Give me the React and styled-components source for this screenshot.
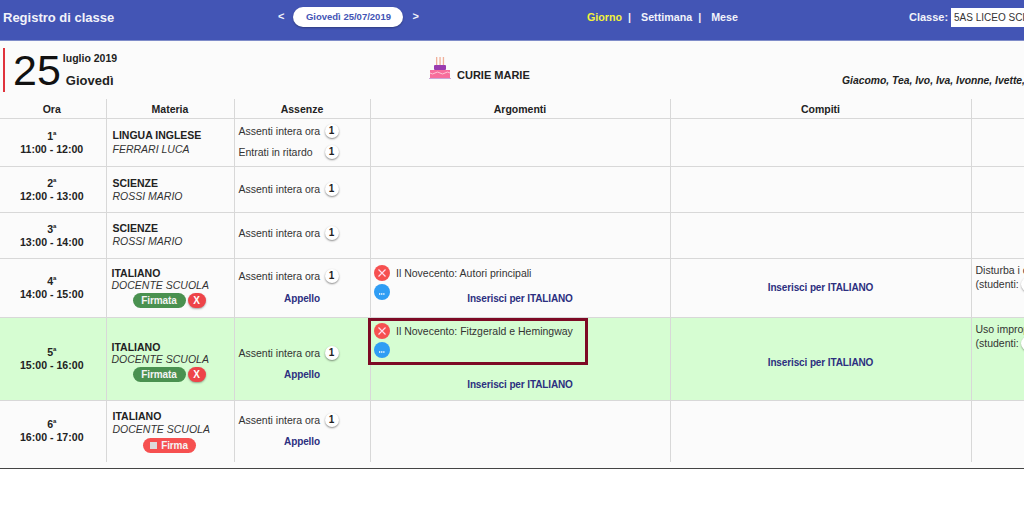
import React from "react";
import styled, { createGlobalStyle } from "styled-components";

const Global = createGlobalStyle`
  html, body {
    margin: 0;
    padding: 0;
    background: #fff;
    overflow: hidden;
  }
  body {
    font-family: "Liberation Sans", Arial, sans-serif;
    color: #222;
  }
`;

const Page = styled.div`
  width: 1024px;
  height: 512px;
  overflow: hidden;
`;

const Content = styled.div`
  width: 1024px;
  height: 468px;
  background: #fbfbfb;
  border-bottom: 1px solid #444;
  overflow: hidden;
`;

const TopBar = styled.header`
  height: 41px;
  box-sizing: border-box;
  padding-bottom: 6px;
  background: #4355b5;
  border-bottom: 1px solid #7f8cc9;
  color: #f2f3fa;
  display: flex;
  align-items: center;
  font-weight: bold;
  white-space: nowrap;
  & > * {
    flex-shrink: 0;
  }
`;

const Title = styled.div`
  width: 278px;
  padding-left: 3px;
  box-sizing: border-box;
  font-size: 13px;
`;

const DateNav = styled.nav`
  width: 309px;
  display: flex;
  align-items: center;
  gap: 9px;
  font-size: 11px;
`;

const Arrow = styled.span`
  padding-bottom: 3px;
`;

const DatePill = styled.div`
  width: 110px;
  height: 20px;
  border-radius: 10px;
  background: #fff;
  color: #4355b5;
  font-size: 9.5px;
  line-height: 20px;
  text-align: center;
  box-shadow: 0 1px 2px rgba(0, 0, 0, 0.3);
`;

const Views = styled.nav`
  width: 322px;
  display: flex;
  font-size: 10.7px;
`;

const ViewLink = styled.span`
  color: ${(p) => (p.$active ? "#f2f23a" : "#f2f3fa")};
  margin-right: 6px;
`;

const Sep = styled.span`
  margin-right: 10px;
`;

const ClassLabel = styled.label`
  width: 42px;
  font-size: 11px;
`;

const ClassSelect = styled.div`
  width: 120px;
  height: 19px;
  background: #fff;
  color: #333;
  font-size: 10px;
  font-weight: normal;
  line-height: 19px;
  padding-left: 3px;
`;

const DayBar = styled.section`
  height: 58px;
  display: flex;
  white-space: nowrap;
  & > * {
    flex-shrink: 0;
  }
`;

const DayBlock = styled.div`
  width: 397px;
  margin: 7px 0 7px 3px;
  height: 44px;
  box-sizing: border-box;
  border-left: 2px solid #e0323c;
  padding-left: 8px;
  display: flex;
`;

const DayNum = styled.div`
  font-size: 43px;
  line-height: 44px;
  color: #111;
  margin-right: 2px;
`;

const DayText = styled.div`
  display: flex;
  flex-direction: column;
  font-weight: bold;
`;

const MonthText = styled.span`
  font-size: 10.5px;
  line-height: 12px;
  margin-top: 4px;
`;

const WeekdayText = styled.span`
  font-size: 13px;
  line-height: 14px;
  margin: 10px 0 0 3px;
`;

const Birthday = styled.div`
  width: 442px;
  height: 38px;
  padding: 15px 0 0 29px;
  box-sizing: border-box;
  display: flex;
  align-items: flex-end;
  gap: 6px;
  font-size: 11px;
  font-weight: bold;
  color: #222;
`;

const BirthdayName = styled.span`
  margin-bottom: -2px;
`;

const Saints = styled.div`
  padding-top: 33px;
  font-size: 10.35px;
  font-weight: bold;
  font-style: italic;
  line-height: 13px;
  color: #222;
`;

const Table = styled.table`
  table-layout: fixed;
  width: 1271px;
  border-collapse: collapse;
  font-size: 10.5px;
`;

const Th = styled.th`
  height: 19px;
  padding: 0;
  font-size: 10.5px;
  text-align: center;
  color: #222;
  border-left: 1px solid #d8d8d8;
  border-bottom: 1px solid #d8d8d8;
  &:first-child {
    border-left: 0;
    padding-right: 2px;
  }
`;

const Tr = styled.tr`
  height: ${(p) => p.$h}px;
  background: ${(p) => (p.$current ? "#d6fdd2" : "transparent")};
  border-bottom: ${(p) => (p.$last ? "0" : "1px solid #d8d8d8")};
`;

const Td = styled.td`
  padding: 0 4px;
  vertical-align: top;
  border-left: 1px solid #d8d8d8;
  box-sizing: border-box;
  &:first-child {
    border-left: 0;
  }
`;

const HourCell = styled(Td)`
  padding: 0 4px 0 2px;
  vertical-align: middle;
  text-align: center;
  font-weight: bold;
  line-height: 13px;
  font-size: 10.6px;
`;

const Sup = styled.sup`
  font-size: 6px;
  line-height: 0;
`;

const Subject = styled.div`
  font-weight: bold;
  line-height: 12px;
  margin: ${(p) => p.$top}px 0 0 ${(p) => (p.$inset ? 2 : 1)}px;
  font-size: 10.5px;
  color: #222;
`;

const Teacher = styled.div`
  font-style: italic;
  line-height: 13px;
  margin: ${(p) => p.$gap}px 0 0 ${(p) => (p.$inset ? 2 : 1)}px;
  color: #333;
  white-space: nowrap;
`;

const SignRow = styled.div`
  display: flex;
  justify-content: center;
  align-items: center;
  gap: 2px;
  margin: ${(p) => p.$top}px 2px 0 0;
`;

const SignBtn = styled.span`
  height: 15px;
  line-height: 15px;
  border-radius: 8px;
  background: ${(p) => (p.$off ? "#f65050" : "#4a9150")};
  color: #f4f4f4;
  font-size: 10px;
  letter-spacing: -0.1px;
  font-weight: bold;
  text-align: center;
  width: 53px;
  display: inline-flex;
  justify-content: center;
  align-items: center;
  gap: 4px;
`;

const SquareMark = styled.i`
  width: 7px;
  height: 7px;
  background: #ddd;
`;

const XBtn = styled.span`
  width: 18px;
  height: 15px;
  line-height: 15px;
  border-radius: 8px;
  background: #ee4449;
  color: #fff;
  font-size: 10px;
  font-weight: bold;
  text-align: center;
  box-shadow: 0 1px 2px rgba(0, 0, 0, 0.35);
`;

const AbsLine = styled.div`
  display: flex;
  align-items: center;
  height: 15px;
  margin-top: ${(p) => p.$top}px;
  white-space: nowrap;
  color: #333;
`;

const AbsLabel = styled.span`
  width: 81px;
`;

const Count = styled.span`
  width: 14px;
  height: 14px;
  line-height: 14px;
  margin-left: 5px;
  border-radius: 50%;
  background: #fff;
  font-size: 10px;
  font-weight: bold;
  text-align: center;
  color: #222;
  box-shadow: 0 1px 2px rgba(0, 0, 0, 0.45);
`;

const CellLink = styled.div`
  color: #2c2f80;
  font-weight: bold;
  font-size: 10px;
  letter-spacing: -0.12px;
  line-height: 12px;
  text-align: center;
  margin-top: ${(p) => p.$top}px;
`;

const TopicBox = styled.div`
  position: relative;
  box-sizing: border-box;
  margin: ${(p) => (p.$boxed ? "0 0 0 -6.5px" : "6px 0 0 -0.5px")};
  width: ${(p) => (p.$boxed ? "220px" : "auto")};
  height: ${(p) => (p.$boxed ? "47px" : "auto")};
  border: ${(p) => (p.$boxed ? "3px solid #7d0a25" : "0")};
  padding: ${(p) => (p.$boxed ? "2px 0 0 3px" : "0")};
  display: grid;
  grid-template-columns: 16px 1fr;
  align-items: center;
  align-content: start;
  column-gap: 6px;
  row-gap: 3px;
  line-height: 12px;
  color: #333;
  font-size: 10.5px;
  white-space: nowrap;
`;

const RoundBtn = styled.span`
  width: 16px;
  height: 16px;
  grid-column: 1;
  border-radius: 50%;
  background: ${(p) => (p.$more ? "#2f9df4" : "#f65050")};
  display: flex;
  align-items: center;
  justify-content: center;
`;

const NoteText = styled.div`
  margin-top: 5px;
  line-height: 13px;
  color: #333;
  white-space: nowrap;
  display: flex;
  flex-direction: column;
`;

const StudentsLine = styled.span`
  display: flex;
  align-items: center;
`;

const StudentChip = styled.span`
  width: 16px;
  height: 15px;
  margin-left: 2px;
  border-radius: 50%;
  background: #fff;
  box-shadow: 0 1px 2px rgba(0, 0, 0, 0.35);
`;

function Cake() {
  return (
    <svg width="22" height="23" viewBox="0 0 22 23">
      <rect x="7" y="1" width="1.3" height="8" fill="#f0b09a" />
      <rect x="10.4" y="1" width="1.3" height="8" fill="#f0b09a" />
      <rect x="13.8" y="1" width="1.3" height="8" fill="#f0b09a" />
      <rect x="5" y="9" width="12" height="5" rx="1" fill="#9a3cb0" />
      <rect x="1" y="14" width="20" height="8" fill="#f76d9c" />
      <path d="M1 17 q2.5 2 5 0 t5 0 t5 0 t5 0" stroke="#fcc6d6" strokeWidth="1" fill="none" />
      <rect x="0" y="22" width="22" height="1" fill="#c9a5d8" />
    </svg>
  );
}

function CloseIcon() {
  return (
    <svg width="10" height="10" viewBox="0 0 10 10">
      <path d="M1.5 1.5 L8.5 8.5 M8.5 1.5 L1.5 8.5" stroke="#fde" strokeWidth="1.2" />
    </svg>
  );
}

function MoreIcon() {
  return (
    <svg width="10" height="10" viewBox="0 0 10 10">
      <path d="M2 7 H8" stroke="#fff" strokeWidth="1.3" strokeDasharray="1.3 .8" />
    </svg>
  );
}

function Topic({ text, boxed }) {
  return (
    <TopicBox $boxed={boxed}>
      <RoundBtn>
        <CloseIcon />
      </RoundBtn>
      <span>{text}</span>
      <RoundBtn $more>
        <MoreIcon />
      </RoundBtn>
    </TopicBox>
  );
}

const rows = [
  {
    n: "1", time: "11:00 - 12:00", h: 48, subject: "LINGUA INGLESE", teacher: "FERRARI LUCA", top: 10, gap: 2, inset: true,
    abs: [["Assenti intera ora", 4], ["Entrati in ritardo", 6]],
  },
  { n: "2", time: "12:00 - 13:00", h: 46, subject: "SCIENZE", teacher: "ROSSI MARIO", top: 10, gap: 1, inset: true, abs: [["Assenti intera ora", 14]] },
  { n: "3", time: "13:00 - 14:00", h: 46, subject: "SCIENZE", teacher: "ROSSI MARIO", top: 9, gap: 1, inset: true, abs: [["Assenti intera ora", 12]] },
  {
    n: "4", time: "14:00 - 15:00", h: 59, subject: "ITALIANO", teacher: "DOCENTE SCUOLA", top: 8, gap: 0, sign: "done", signTop: 1,
    abs: [["Assenti intera ora", 9]], call: 10, topic: "Il Novecento: Autori principali", insTop: -7, compTop: 23,
    note: "Disturba i compagni",
  },
  {
    n: "5", time: "15:00 - 16:00", h: 83, current: true, subject: "ITALIANO", teacher: "DOCENTE SCUOLA", top: 23, gap: 0, sign: "done", signTop: 1,
    abs: [["Assenti intera ora", 27]], call: 9, topic: "Il Novecento: Fitzgerald e Hemingway", boxed: true, insTop: 14, compTop: 39,
    note: "Uso improprio del cellulare",
  },
  {
    n: "6", time: "16:00 - 17:00", h: 61, last: true, subject: "ITALIANO", teacher: "DOCENTE SCUOLA", top: 9, gap: 1, inset: true, sign: "todo", signTop: 2,
    abs: [["Assenti intera ora", 11]], call: 9,
  },
];

function Row({ r }) {
  return (
    <Tr $h={r.h} $current={r.current} $last={r.last}>
      <HourCell>
        {r.n}<Sup>a</Sup>
        <br />
        {r.time}
      </HourCell>
      <Td>
        <Subject $top={r.top} $inset={r.inset}>{r.subject}</Subject>
        <Teacher $inset={r.inset} $gap={r.gap}>{r.teacher}</Teacher>
        {r.sign === "done" && (
          <SignRow $top={r.signTop}>
            <SignBtn>Firmata</SignBtn>
            <XBtn>X</XBtn>
          </SignRow>
        )}
        {r.sign === "todo" && (
          <SignRow $top={r.signTop}>
            <SignBtn $off>
              <SquareMark />
              Firma
            </SignBtn>
          </SignRow>
        )}
      </Td>
      <Td>
        {r.abs.map(([label, top]) => (
          <AbsLine key={label} $top={top}>
            <AbsLabel>{label}</AbsLabel>
            <Count>1</Count>
          </AbsLine>
        ))}
        {r.call && <CellLink $top={r.call}>Appello</CellLink>}
      </Td>
      <Td>
        {r.topic && <Topic text={r.topic} boxed={r.boxed} />}
        {r.topic && <CellLink $top={r.insTop}>Inserisci per ITALIANO</CellLink>}
      </Td>
      <Td>
        {r.topic && <CellLink $top={r.compTop}>Inserisci per ITALIANO</CellLink>}
      </Td>
      <Td>
        {r.note && (
          <NoteText>
            {r.note}
            <StudentsLine>
              (studenti:
              <StudentChip />
            </StudentsLine>
          </NoteText>
        )}
      </Td>
    </Tr>
  );
}

export default function App() {
  return (
    <Page>
      <Global />
      <Content>
        <TopBar>
          <Title>Registro di classe</Title>
          <DateNav>
            <Arrow>&lt;</Arrow>
            <DatePill>Giovedì 25/07/2019</DatePill>
            <Arrow>&gt;</Arrow>
          </DateNav>
          <Views>
            <ViewLink $active>Giorno</ViewLink>
            <Sep>|</Sep>
            <ViewLink>Settimana</ViewLink>
            <Sep>|</Sep>
            <ViewLink>Mese</ViewLink>
          </Views>
          <ClassLabel>Classe:</ClassLabel>
          <ClassSelect>5AS LICEO SCIENTIFICO</ClassSelect>
        </TopBar>
        <DayBar>
          <DayBlock>
            <DayNum>25</DayNum>
            <DayText>
              <MonthText>luglio 2019</MonthText>
              <WeekdayText>Giovedì</WeekdayText>
            </DayText>
          </DayBlock>
          <Birthday>
            <Cake />
            <BirthdayName>CURIE MARIE</BirthdayName>
          </Birthday>
          <Saints>Giacomo, Tea, Ivo, Iva, Ivonne, Ivette, Cristoforo</Saints>
        </DayBar>
        <Table>
          <colgroup>
            <col width="106" />
            <col width="128" />
            <col width="136" />
            <col width="300" />
            <col width="301" />
            <col width="300" />
          </colgroup>
          <thead>
            <tr>
              <Th>Ora</Th>
              <Th>Materia</Th>
              <Th>Assenze</Th>
              <Th>Argomenti</Th>
              <Th>Compiti</Th>
              <Th>Note</Th>
            </tr>
          </thead>
          <tbody>
            {rows.map((r) => (
              <Row key={r.n} r={r} />
            ))}
          </tbody>
        </Table>
      </Content>
    </Page>
  );
}
